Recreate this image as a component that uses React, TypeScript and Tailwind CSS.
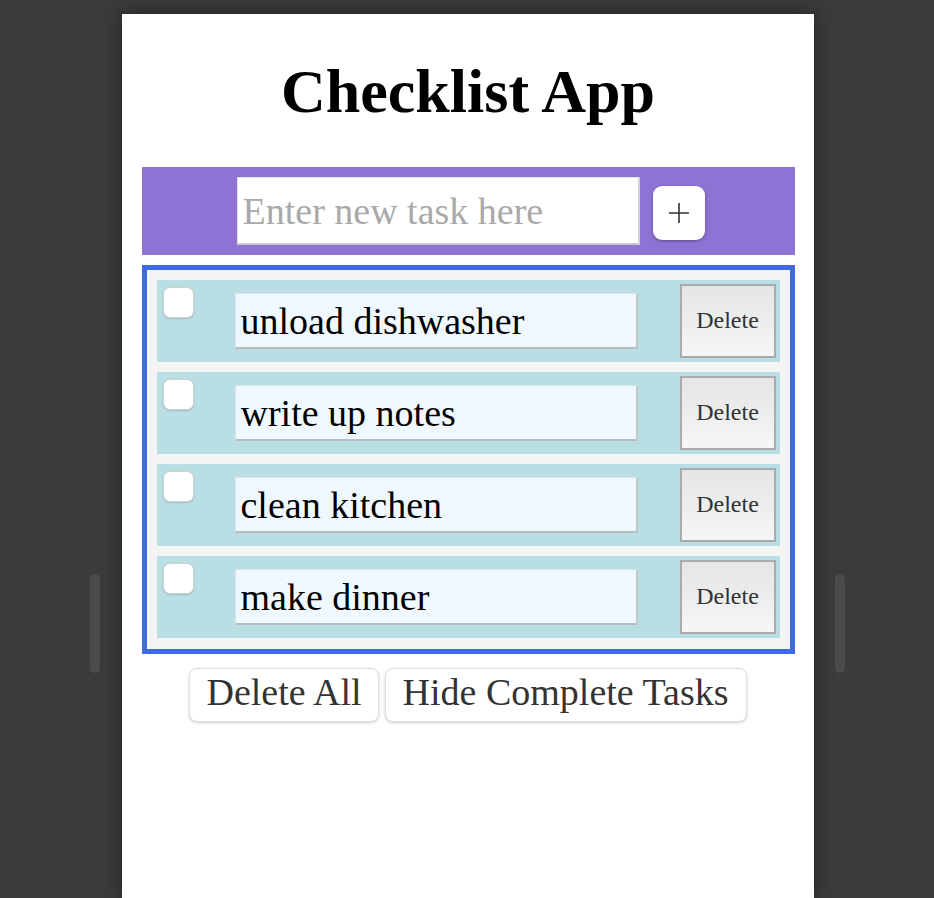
import React from "react";

const tasks = ["unload dishwasher", "write up notes", "clean kitchen", "make dinner"];

function TaskItem({ text }: { text: string }) {
  return (
    <div className="flex items-center h-[82px] bg-[#b9dee4]">
      <input
        type="checkbox"
        className="appearance-none self-start mt-[7px] ml-[6px] w-[31px] h-[31px] rounded-[7px] bg-white border border-[#cfcfcf] shadow-[0_1px_2px_rgba(0,0,0,0.15)] shrink-0"
      />
      <input
        type="text"
        defaultValue={text}
        className="ml-[41px] w-[403px] h-[56px] bg-[#f0f8ff] text-black text-[38px] pl-[5px] pt-[1px] outline-none border-t border-l border-[#dde5ea] border-b-2 border-r-2 border-b-[#b9bcbe] border-r-[#c4c8ca] shrink-0"
        style={{ fontFamily: '"Liberation Serif", "Times New Roman", serif' }}
      />
      <button
        className="ml-[42px] w-[96px] h-[74px] bg-gradient-to-b from-[#e5e5e5] to-[#f6f6f6] border-2 border-[#ababab] text-[#333] text-[24px] pb-[2px] shrink-0"
        style={{ fontFamily: '"Liberation Serif", "Times New Roman", serif' }}
      >
        Delete
      </button>
    </div>
  );
}

export default function App() {
  return (
    <div
      className="w-full h-[898px] bg-[#3b3b3b] flex justify-center items-start overflow-hidden pl-[1px]"
      style={{ fontFamily: '"Liberation Serif", "Times New Roman", serif' }}
    >
      <div className="w-[10px] h-[99px] mt-[574px] rounded-full bg-[#4b4b4b]" />
      <div className="ml-[22px] mt-[14px] w-[692px] h-[884px] bg-white shadow-[0_0_18px_rgba(0,0,0,0.45)] flex flex-col items-center pt-[42px]">
        <h1 className="text-[62px] leading-[70px] font-bold text-black">Checklist App</h1>
        <div className="mt-[41px] w-[653px] h-[88px] bg-[#8e72d4] flex items-center pl-[95px]">
          <input
            type="text"
            placeholder="Enter new task here"
            className="w-[403px] h-[68px] bg-white text-[38px] pl-[5px] outline-none placeholder:text-[#a9a9a9] border-t border-l border-[#e3e3e3] border-b-2 border-r-2 border-b-[#c9c9c9] border-r-[#d2d2d2]"
            style={{ fontFamily: '"Liberation Serif", "Times New Roman", serif' }}
          />
          <button className="ml-[13px] mt-[4px] w-[52px] h-[54px] bg-white rounded-[9px] shadow-[0_1px_3px_rgba(0,0,0,0.35)] flex items-center justify-center">
            <svg width="22" height="22" viewBox="0 0 22 22">
              <path d="M11 1v20M1 11h20" stroke="#333" strokeWidth="1.6" fill="none" />
            </svg>
          </button>
        </div>
        <div className="mt-[10px] w-[653px] border-[5px] border-[#4169e1] bg-[#f4f4f4] p-[10px] pb-[11px] flex flex-col gap-[10px]">
          {tasks.map((t) => (
            <TaskItem key={t} text={t} />
          ))}
        </div>
        <div className="mt-[14px] flex gap-[6px]">
          <button className="h-[54px] px-[16px] pb-[6px] leading-[40px] flex items-center bg-white rounded-[8px] border border-[#e0e0e0] shadow-[0_1px_3px_rgba(0,0,0,0.2)] text-[38px] text-[#333]">
            Delete All
          </button>
          <button className="h-[54px] px-[17px] pb-[6px] leading-[40px] flex items-center bg-white rounded-[8px] border border-[#e0e0e0] shadow-[0_1px_3px_rgba(0,0,0,0.2)] text-[38px] text-[#333]">
            Hide Complete Tasks
          </button>
        </div>
      </div>
      <div className="ml-[21px] w-[10px] h-[99px] mt-[574px] rounded-full bg-[#4b4b4b]" />
    </div>
  );
}
